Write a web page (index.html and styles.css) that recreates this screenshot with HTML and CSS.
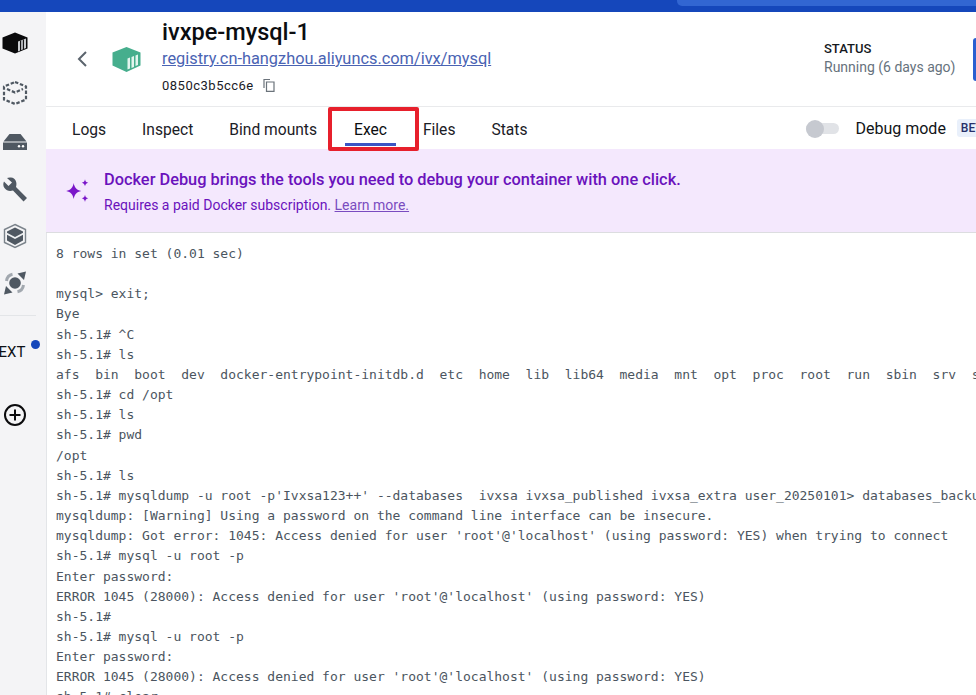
FILE: index.html
```html
<!DOCTYPE html>
<html lang="en">
<head>
<meta charset="utf-8">
<title>ivxpe-mysql-1</title>
<link rel="stylesheet" href="styles.css">
</head>
<body>
<div class="topbar"><div class="search"></div></div>
<div class="app">
  <nav class="sidebar">
    <svg class="nav nav-first" width="26" height="26" viewBox="0 0 26 26"><path d="M13 2.500l12.500 5v11L13 23.500.5 18.500v-11z" fill="#0a0a0c"/><path d="M16 11.500l8-3v9.500l-8 3.500z" fill="#c9ccd0"/><path d="M18.600 10.500v10.500M21.400 9.500v10" stroke="#0a0a0c" stroke-width="1.100"/></svg>
    <svg class="nav" width="26" height="26" viewBox="0 0 26 26" fill="none" stroke="#4f5862" stroke-width="2.200" stroke-dasharray="3.500 1.800"><path d="M13 2l11 4.500v13L13 24 2 19.500v-13z"/><path d="M5 9l8 3.500L21 9"/></svg>
    <svg class="nav" width="26" height="26" viewBox="0 0 26 26"><path d="M7.500 5h11l6 7.500H1.500z" fill="#4f5862"/><path d="M1 13.500h24V21H1z" fill="#4f5862"/><circle cx="17" cy="17.200" r="1.200" fill="#fff"/><circle cx="21" cy="17.200" r="1.200" fill="#fff"/></svg>
    <svg class="nav" width="26" height="26" viewBox="0 0 26 26"><path d="M21.500 25.500l3.500-3.500-11-11C15.500 6.500 13.500 2 9 1.500 7.500 1.300 6 1.500 5 2l5 4.500L6.500 10 2 5.500C1 7.500 1 10 2.500 12 4.500 15 8 15.500 11 14.500z" fill="#4f5862"/></svg>
    <svg class="nav" width="26" height="26" viewBox="0 0 26 26"><path d="M13 1.500l10.500 5v13L13 24.500 2.500 19.500v-13z" fill="none" stroke="#7b838b" stroke-width="1.400"/><path d="M13 4.500l8 4v9l-8 4.500-8-4.500v-9z" fill="#4f5862"/><path d="M4.500 10.500l8.500 4.500 8.500-4.500" fill="none" stroke="#eef0f2" stroke-width="1.800"/></svg>
    <svg class="nav" width="26" height="26" viewBox="0 0 26 26"><circle cx="13" cy="13" r="5.800" fill="#4f5862"/><path d="M24 1.500l-2 8.500-6.500-6.500zM2 24.500l2-8.500 6.500 6.500z" fill="#4f5862"/><path d="M4.500 11C5 7.500 7 5 10.500 4.300M21.500 15c-.5 3.500-2.500 6-6 6.700" fill="none" stroke="#a2a8af" stroke-width="3"/></svg>
    <div class="divider"></div>
    <div class="ext">EXT<span class="dot"></span></div>
    <svg class="add" width="24" height="24" viewBox="0 0 24 24" fill="none" stroke="#0b0b0d" stroke-width="2"><circle cx="12" cy="12" r="10"/><path d="M12 6.500v11M6.500 12h11"/></svg>
  </nav>
  <main class="main">
    <header class="head">
      <svg class="back" width="12" height="18" viewBox="0 0 12 18" fill="none" stroke="#5b646d" stroke-width="2"><path d="M10 2L3 9l7 7"/></svg>
      <svg class="cube" width="29" height="25" viewBox="0 0 29 25"><path d="M14.500 0L28.500 5.500v13L14.500 25 .5 18.500v-13z" fill="#46ae8d"/><path d="M15.500 11.500l2.500-1v11l-2.500 1zM19.500 10l2.500-1v11l-2.500 1zM23.500 8.500l2.500-1v10.500l-2.500 1z" fill="#e2f5ee"/></svg>
      <div class="titles">
        <h1 class="name">ivxpe-mysql-1</h1>
        <a class="image" href="#">registry.cn-hangzhou.aliyuncs.com/ivx/mysql</a>
        <div class="idrow"><span class="cid">0850c3b5cc6e</span>
          <svg width="13" height="14" viewBox="0 0 13 14" fill="none" stroke="#6b737b" stroke-width="1.200"><path d="M1 10V1.500h6"/><path d="M3.500 4h7.500v9.300H3.500z"/></svg>
        </div>
      </div>
      <div class="status">
        <div class="status-label">STATUS</div>
        <div class="status-value">Running (6 days ago)</div>
      </div>
      <div class="action"></div>
    </header>
    <div class="tabs">
      <span class="tab tab-logs">Logs</span>
      <span class="tab tab-inspect">Inspect</span>
      <span class="tab tab-bind">Bind mounts</span>
      <span class="tab tab-exec">Exec</span>
      <span class="tab tab-files">Files</span>
      <span class="tab tab-stats">Stats</span>
      <span class="toggle"><span class="knob"></span></span>
      <span class="debug">Debug mode</span>
      <span class="beta">BETA</span>
      <span class="redbox"></span>
    </div>
    <section class="banner">
      <svg class="sparkle" width="28" height="28" viewBox="0 0 26 26" fill="#7a16c9"><path d="M9 5.500c.8 4.500 2.500 6.300 7 7.500-4.500 1.200-6.200 3-7 7.500-.8-4.500-2.500-6.300-7-7.500 4.500-1.200 6.200-3 7-7.500z"/><path d="M19.500 2c.4 2 1.100 2.800 3 3.300-1.900.5-2.600 1.300-3 3.300-.4-2-1.100-2.800-3-3.300 1.900-.5 2.600-1.300 3-3.300zM19.500 16.500c.4 2 1.100 2.800 3 3.300-1.900.5-2.600 1.300-3 3.300-.4-2-1.100-2.800-3-3.300 1.900-.5 2.600-1.300 3-3.300z"/></svg>
      <div class="banner-text">
        <div class="banner-title">Docker Debug brings the tools you need to debug your container with one click.</div>
        <div class="banner-sub">Requires a paid Docker subscription. <a href="#">Learn more.</a></div>
      </div>
    </section>
    <pre class="term">8 rows in set (0.01 sec)

mysql&gt; exit;
Bye
sh-5.1# ^C
sh-5.1# ls
afs  bin  boot  dev  docker-entrypoint-initdb.d  etc  home  lib  lib64  media  mnt  opt  proc  root  run  sbin  srv  sys
sh-5.1# cd /opt
sh-5.1# ls
sh-5.1# pwd
/opt
sh-5.1# ls
sh-5.1# mysqldump -u root -p'Ivxsa123++' --databases  ivxsa ivxsa_published ivxsa_extra user_20250101&gt; databases_backup.sql
mysqldump: [Warning] Using a password on the command line interface can be insecure.
mysqldump: Got error: 1045: Access denied for user 'root'@'localhost' (using password: YES) when trying to connect
sh-5.1# mysql -u root -p
Enter password:
ERROR 1045 (28000): Access denied for user 'root'@'localhost' (using password: YES)
sh-5.1#
sh-5.1# mysql -u root -p
Enter password:
ERROR 1045 (28000): Access denied for user 'root'@'localhost' (using password: YES)
sh-5.1# clear</pre>
  </main>
</div>
</body>
</html>
```
FILE: styles.css
```css
html, body {
  margin: 0;
  height: 100%;
  overflow: hidden;
  background: #fff;
  font-family: Roboto, "Liberation Sans", sans-serif;
}
.topbar {
  height: 12px;
  background: #1547bb;
  display: flex;
  justify-content: flex-end;
}
.search {
  width: 299px;
  height: 6px;
  background: #3266d2;
  border-bottom-left-radius: 5px;
}
.app {
  display: flex;
  height: 683px;
}
.sidebar {
  width: 46px;
  flex: none;
  background: #f4f4f6;
  display: flex;
  flex-direction: column;
  align-items: center;
}
.nav {
  margin-top: 21px;
  flex: none;
  margin-right: 16px;
}
.nav-first { margin-top: 18px; }
.nav:nth-child(2) { margin-top: 24px; }
.nav:nth-child(3) { margin-top: 23px; }
.divider {
  width: 36px;
  height: 1px;
  background: #e3e5e8;
  margin: 19px 10px 0 0;
}
.ext {
  width: 46px;
  margin-top: 27px;
  margin-left: -3px;
  font-size: 15px;
  line-height: 18px;
  color: #0d1116;
  position: relative;
}
.dot {
  position: absolute;
  left: 32px;
  top: -3px;
  width: 9px;
  height: 9px;
  border-radius: 50%;
  background: #1547bb;
}
.add {
  margin: 42px 16px 0 0;
}
.main {
  flex: 1;
  min-width: 0;
  display: flex;
  flex-direction: column;
}
.head {
  height: 95px;
  flex: none;
  box-sizing: border-box;
  border-bottom: 1px solid #e9eaec;
  display: flex;
  align-items: flex-start;
}
.back { margin: 38px 0 0 30px; flex: none; }
.cube { margin: 35px 0 0 24px; flex: none; }
.titles { margin-left: 21px; width: 662px; flex: none; }
.name {
  margin: 4px 0 0;
  font-size: 23.5px;
  line-height: 32px;
  font-weight: 500;
  color: #0b0d10;
}
.image {
  display: block;
  margin-top: 1px;
  font-size: 16.35px;
  line-height: 20px;
  color: #4a63b3;
}
.idrow {
  display: flex;
  align-items: center;
  gap: 9px;
  margin-top: 7px;
  height: 18px;
}
.cid {
  font-size: 13px;
  letter-spacing: .5px;
  color: #1a2027;
}
.status { flex: none; margin-top: 28px; width: 149px; }
.status-label {
  font-size: 13px;
  line-height: 17px;
  font-weight: 500;
  color: #15191e;
}
.status-value {
  font-size: 14px;
  line-height: 20px;
  color: #66727d;
}
.action {
  flex: none;
  width: 10px;
  height: 43px;
  margin-top: 26px;
  background: #2a5fd0;
  border-radius: 3px 0 0 3px;
}
.tabs {
  height: 42px;
  flex: none;
  position: relative;
  display: flex;
  align-items: center;
  font-size: 15.6px;
  color: #1b2026;
}
.tab { flex: none; padding-top: 4px; }
.tab-logs { margin-left: 26px; }
.tab-inspect { margin-left: 36px; }
.tab-bind { margin-left: 36px; }
.tab-exec {
  margin-left: 37px;
  color: #0b0d10;
  position: relative;
}
.tab-exec::after {
  content: "";
  position: absolute;
  left: -9px;
  right: -9px;
  bottom: -7px;
  height: 3px;
  background: #3b55c4;
}
.tab-files { margin-left: 36px; }
.tab-stats { margin-left: 36px; }
.toggle {
  margin-left: 279px;
  width: 33px;
  height: 11px;
  border-radius: 6px;
  background: #e1e3e7;
  position: relative;
  flex: none;
}
.knob {
  position: absolute;
  left: 0;
  top: -3px;
  width: 18px;
  height: 18px;
  border-radius: 50%;
  background: #c6c9d0;
}
.debug {
  margin-left: 16px;
  flex: none;
  font-size: 16px;
  color: #111418;
}
.beta {
  margin-left: 11px;
  flex: none;
  padding: 2px 4px;
  background: #e9f0fb;
  border-radius: 3px;
  font-size: 12px;
  font-weight: 500;
  color: #27306a;
}
.redbox {
  position: absolute;
  left: 282px;
  top: 0;
  width: 91px;
  height: 44px;
  box-sizing: border-box;
  border: 4px solid #e7202c;
  border-radius: 2px;
  z-index: 2;
}
.banner {
  height: 84px;
  flex: none;
  box-sizing: border-box;
  background: #f4e8fd;
  border-bottom: 1px solid #dcdde0;
  display: flex;
  align-items: center;
  padding-left: 18px;
  gap: 12px;
}
.sparkle { flex: none; }
.banner-text { padding-top: 2px; }
.banner-title {
  font-size: 16.37px;
  line-height: 22px;
  font-weight: 500;
  color: #6a12bc;
}
.banner-sub {
  margin-top: 4px;
  font-size: 14px;
  line-height: 20px;
  color: #6a12bc;
}
.banner-sub a { color: #7a4cc0; }
.term {
  flex: 1;
  margin: 0;
  padding: 11px 0 0 9px;
  border-left: 1px solid #e3e5e8;
  overflow: hidden;
  font-family: "DejaVu Sans Mono", monospace;
  font-size: 13px;
  line-height: 20.15px;
  color: #4b5560;
  white-space: pre;
}
```
